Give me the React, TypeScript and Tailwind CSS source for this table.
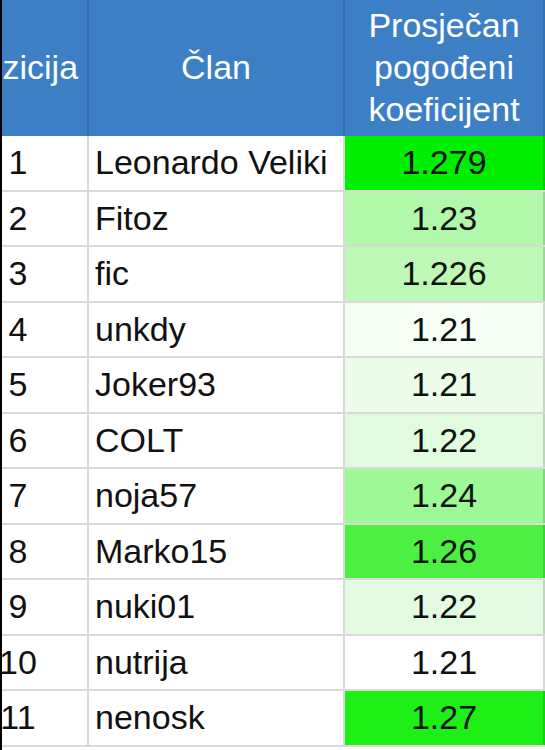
const rows = [
  { pos: 1, name: 'Leonardo Veliki', coef: '1.279', bg: 'bg-[#00ee00]' },
  { pos: 2, name: 'Fitoz', coef: '1.23', bg: 'bg-[#b1f8aa]' },
  { pos: 3, name: 'fic', coef: '1.226', bg: 'bg-[#bdf8b6]' },
  { pos: 4, name: 'unkdy', coef: '1.21', bg: 'bg-[#f6fef5]' },
  { pos: 5, name: 'Joker93', coef: '1.21', bg: 'bg-[#ebfce9]' },
  { pos: 6, name: 'COLT', coef: '1.22', bg: 'bg-[#e0fbdd]' },
  { pos: 7, name: 'noja57', coef: '1.24', bg: 'bg-[#9df896]' },
  { pos: 8, name: 'Marko15', coef: '1.26', bg: 'bg-[#4bf042]' },
  { pos: 9, name: 'nuki01', coef: '1.22', bg: 'bg-[#e3fbe0]' },
  { pos: 10, name: 'nutrija', coef: '1.21', bg: 'bg-white' },
  { pos: 11, name: 'nenosk', coef: '1.27', bg: 'bg-[#1eef17]' },
];

export default function App() {
  return (
    <div className="w-[545px] h-[750px] bg-white overflow-hidden border-l-2 border-black font-['Liberation_Sans',Arial,sans-serif] text-[34px] text-[#111]">
      {/* table is scrolled sideways, first column partly hidden */}
      <div className="ml-[-51px] w-[594px]">
        {/* Header */}
        <div className="flex h-[136px] bg-[#3c7fc5] text-white leading-[42px]">
          <div className="w-[138px] border-r-2 border-[#3270b0] flex items-center justify-center pl-[1px] pb-[3px]">
            Pozicija
          </div>
          <div className="w-[256px] border-r-2 border-[#3270b0] flex items-center justify-center pb-[3px]">
            Član
          </div>
          <div className="w-[200px] border-r-2 border-[#3270b0] flex items-center justify-center text-center pb-[3px]">
            Prosječan<br />pogođeni<br />koeficijent
          </div>
        </div>

        {/* Rows */}
        {rows.map(r => (
          <div key={r.pos} className="flex h-[55.5px] border-b-2 border-black/15 leading-[53px]">
            <div className="w-[138px] border-r-2 border-black/15 text-center pr-[2px]">{r.pos}</div>
            <div className="w-[256px] border-r-2 border-black/15 pl-[6px] whitespace-nowrap">{r.name}</div>
            <div className={`w-[200px] border-r-2 border-black/15 text-center ${r.bg}`}>{r.coef}</div>
          </div>
        ))}
      </div>
    </div>
  );
}
